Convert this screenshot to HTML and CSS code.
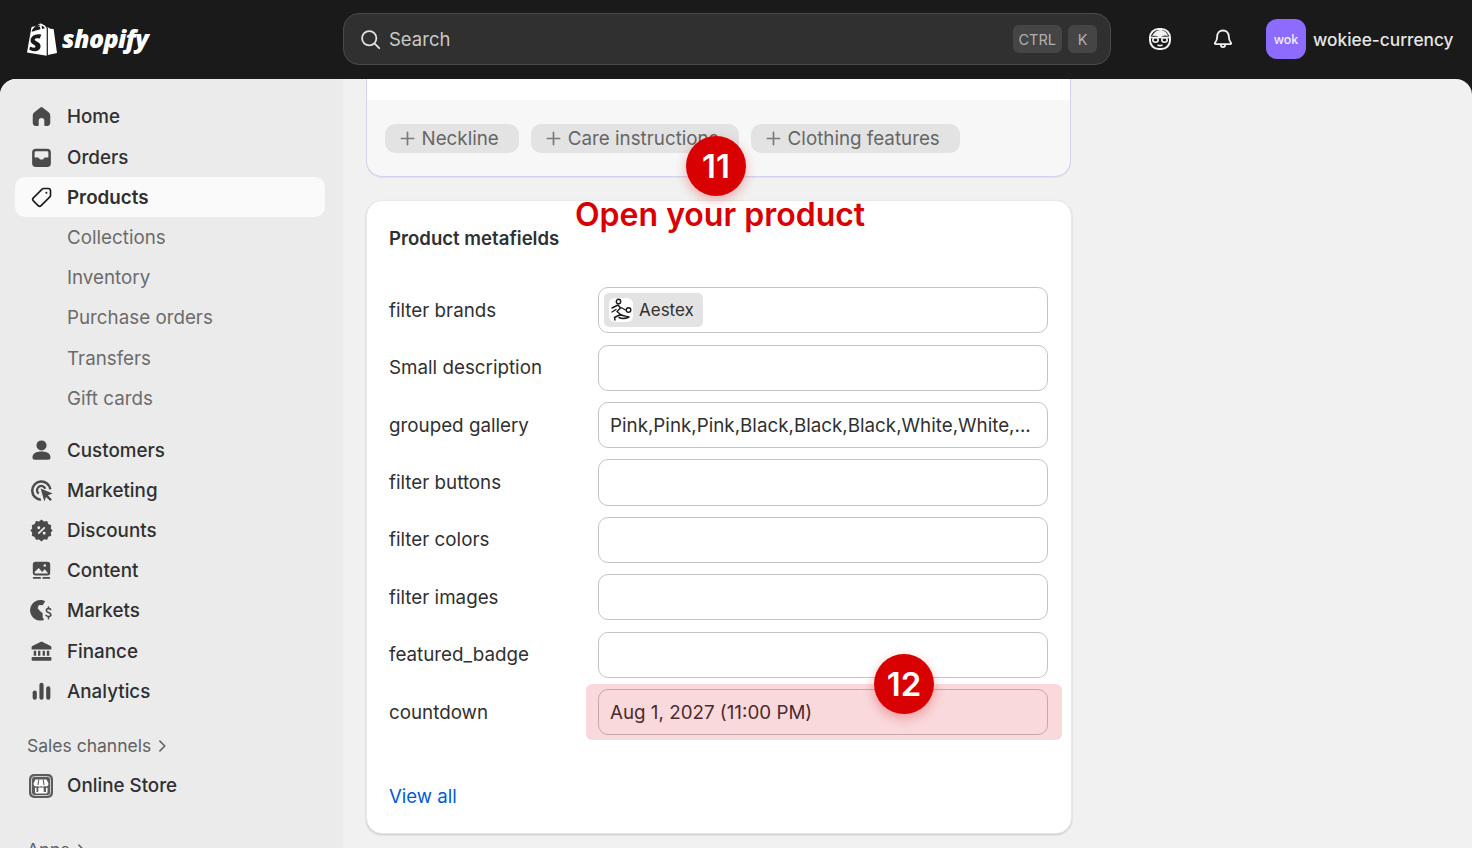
FILE: index.html
```html
<!DOCTYPE html>
<html lang="en">
<head>
<meta charset="utf-8">
<title>Shopify admin</title>
<link rel="stylesheet" href="styles.css">
</head>
<body>
<div class="page">
  <header class="topbar">
    <div class="brand">
      <svg class="bag" viewBox="5 0 25 34" width="30" height="34" preserveAspectRatio="none"><path fill="#fff" fill-rule="evenodd" d="M22.6 5.4l-1.5.5c-.4-1.300-1.200-2.700-2.500-3.100-.2-.2-.5-.4-.8-.5C16.500.8 14.900 2 13.800 3.400c-1.500.4-3 1-3.800 1.200-.8.3-1.200.4-1.400 1.300L5 30.500 21.400 33.700V5.200zM19.900 6.300l-2.400.7c.1-1.200-.1-2.400-.5-3.200 1.500.3 2.500 1.400 2.900 2.500zM16.200 7.300l-4.500 1.400c.6-2.400 1.900-3.900 3.500-4.500.7.700 1 2 1 3.100zM14.300 3.100c.4-.3.900-.5 1.400-.4.200 0 .4.100.6.200-2 1-4 3.200-4.800 6.100l-2.700.8C9.500 7 11.500 4 14.300 3.100z"/><path fill="#fff" d="M22.400 5.200l2 1.600 2.500.2c.2 0 .3.200.3.300L30 30.900l-7.600 2.100z"/><path fill="#1a1a1a" d="M16.700 13.200l-1 3.400s-1.100-.5-2.400-.4c-1.900.1-1.900 1.300-1.900 1.600.1 1.700 4.600 2 4.900 6 .2 3.100-1.700 5.300-4.400 5.400-3.200.2-5-1.700-5-1.700l.7-2.900s1.800 1.300 3.200 1.200c.9-.1 1.300-.8 1.200-1.300-.1-2.200-3.800-2.100-4-5.800-.2-3.100 1.900-6.200 6.400-6.500 1.700-.1 2.700.5 2.700.5z"/></svg>
      <span class="wordmark">shopify</span>
    </div>
    <div class="search">
      <svg class="ic-search" viewBox="0 0 20 20" fill="none" stroke="#e3e3e3" stroke-width="1.700" stroke-linecap="round"><circle cx="8.800" cy="8.800" r="6.800"/><path d="M13.700 13.700l4.600 4.600"/></svg>
      <span class="search-text">Search</span>
      <span class="key">CTRL</span>
      <span class="key">K</span>
    </div>
    <div class="top-actions">
      <svg class="ic-top" viewBox="0 0 24 24" fill="none" stroke="#f1f1f1" stroke-width="2"><rect x="2" y="2" width="20" height="20" rx="8.500"/><path fill="#f1f1f1" stroke="none" d="M4 9c2-4 5-6 8-6 4 0 7 2.500 8 6-4-1.500-6 .5-8 1.500C10 9.500 8 8 4 9z"/><path d="M2.500 10.500l19 0" stroke-width="1.600"/><ellipse cx="7.500" cy="13" rx="2.700" ry="2.200" stroke-width="1.600"/><ellipse cx="16.500" cy="13" rx="2.700" ry="2.200" stroke-width="1.600"/><path d="M9.500 18c1.500.8 3.500.8 5 0" stroke-width="1.600"/></svg>
      <svg class="ic-top" viewBox="0 0 24 24" fill="none" stroke="#f1f1f1" stroke-width="1.800" stroke-linejoin="round"><path d="M12 3.500c-3.500 0-5.800 2.600-5.800 6 0 3-.7 4.500-2.200 6.300-.5.600-.1 1.400.6 1.400h14.800c.7 0 1.100-.8.600-1.400-1.500-1.800-2.200-3.300-2.200-6.300 0-3.400-2.300-6-5.800-6z"/><path d="M9.800 17.500c0 1.500 1 2.700 2.200 2.700s2.200-1.200 2.200-2.700"/></svg>
    </div>
    <div class="account">
      <span class="avatar">wok</span>
      <span class="store-name">wokiee-currency</span>
    </div>
  </header>

  <div class="shell">
    <nav class="sidebar">
      <a class="item"><svg class="ic" viewBox="0 0 20 20"><path fill="#4a4a4a" d="M8.900 2.900a1.750 1.750 0 0 1 2.200 0l4.600 3.700c.9.700 1.300 1.700 1.300 2.800V15a2.500 2.500 0 0 1-2.500 2.500H13a.75.75 0 0 1-.75-.75V13.500a2.250 2.250 0 0 0-4.500 0v3.250A.75.75 0 0 1 7 17.500H5.500A2.500 2.500 0 0 1 3 15V9.400c0-1.100.4-2.100 1.300-2.800z"/></svg><span>Home</span></a>
      <a class="item"><svg class="ic" viewBox="0 0 20 20"><path fill="#4a4a4a" fill-rule="evenodd" d="M2.500 6A3 3 0 0 1 5.500 3h9a3 3 0 0 1 3 3v8.500a3 3 0 0 1-3 3h-9a3 3 0 0 1-3-3zM4.500 6a1 1 0 0 1 1-1h9a1 1 0 0 1 1 1v4h-2.700a1 1 0 0 0-.9.550l-.2.400a1 1 0 0 1-.9.550H9.200a1 1 0 0 1-.9-.550l-.2-.400A1 1 0 0 0 7.200 10H4.500z"/></svg><span>Orders</span></a>
      <a class="item active"><svg class="ic" viewBox="0 0 20 20" fill="none" stroke="#1a1a1a" stroke-width="1.300" stroke-linejoin="round"><path d="M11.700 2.800h3.800a1.700 1.700 0 0 1 1.700 1.700v3.800a1.700 1.700 0 0 1-.5 1.200l-7 7a1.700 1.700 0 0 1-2.400 0l-3.800-3.800a1.700 1.700 0 0 1 0-2.400l7-7a1.700 1.700 0 0 1 1.200-.5z"/><circle cx="13.900" cy="6.100" r=".8" fill="#1a1a1a" stroke="none"/></svg><span>Products</span></a>
      <a class="item sub">Collections</a>
      <a class="item sub">Inventory</a>
      <a class="item sub">Purchase orders</a>
      <a class="item sub">Transfers</a>
      <a class="item sub">Gift cards</a>
      <div class="group">
        <a class="item"><svg class="ic" viewBox="0 0 20 20"><circle cx="10" cy="5.900" r="4" fill="#4a4a4a"/><path fill="#4a4a4a" d="M2.800 15.300c0-2.900 2.900-4.600 7.200-4.600s7.200 1.700 7.200 4.600a1.900 1.900 0 0 1-1.900 2H4.700a1.900 1.900 0 0 1-1.900-2z"/></svg><span>Customers</span></a>
        <a class="item"><svg class="ic" viewBox="0 0 20 20" fill="none" stroke="#4a4a4a" stroke-width="2"><path d="M9.500 17.400A7.300 7.300 0 1 1 17.100 9"/><path d="M7.800 12.500A3.400 3.400 0 1 1 13 8.600" stroke-width="1.800"/><path fill="#4a4a4a" stroke="none" d="M9.300 8.400l9.600 4-3.800 1.300 3.200 3.400-1.300 1.300-3.400-3.300-1.300 3.700z"/></svg><span>Marketing</span></a>
        <a class="item"><svg class="ic" viewBox="-2 -2 24 24"><path fill="#4a4a4a" fill-rule="evenodd" d="M10 -.5l2.400 1.900 3-.4 1.100 2.800 2.800 1.200-.4 3 1.800 2-1.800 2 .4 3-2.800 1.100-1.100 2.800-3-.4L10 20.500l-2.400-1.900-3 .4-1.100-2.800L.7 15l.4-3L-.7 10l1.800-2-.4-3 2.800-1.200L4.600 1l3 .4zM12.500 6.300L6.300 12.500l1.200 1.200 6.200-6.200zM7.400 6a1.400 1.400 0 1 0 0 2.800 1.400 1.400 0 0 0 0-2.800zM12.600 11.200a1.400 1.400 0 1 0 0 2.800 1.400 1.400 0 0 0 0-2.800z"/></svg><span>Discounts</span></a>
        <a class="item"><svg class="ic" viewBox="-1.500 -1.500 23 23"><path fill="#4a4a4a" fill-rule="evenodd" d="M4.500 2h11A2.500 2.500 0 0 1 18 4.500v7.500a2.500 2.500 0 0 1-2.500 2.500h-11A2.500 2.500 0 0 1 2 12V4.500A2.500 2.500 0 0 1 4.500 2zM3.800 12.800h12.400L13 8.800l-2.500 2.500-3-3.500-3.700 3.400zM13 4.200a1.200 1.200 0 1 0 0 2.400 1.200 1.200 0 0 0 0-2.400z"/><rect x="2" y="16" width="7.500" height="1.700" rx=".85" fill="#4a4a4a"/><rect x="10.800" y="16" width="7.200" height="1.700" rx=".85" fill="#4a4a4a"/></svg><span>Content</span></a>
        <a class="item"><svg class="ic" viewBox="0 0 20 20"><path fill="#4a4a4a" d="M9 1.500c1.500 0 2.900.4 4 1.100l-2.100 3.100-3-.2-1 2.600 2 2.500 2 1.300v3.300l1.100 2.400A8.300 8.300 0 1 1 9 1.500z"/><path d="M17.300 9.200c-.6-1-3.400-1.300-3.400.7 0 2.100 3.600 1.400 3.600 3.500 0 1.900-3.100 1.600-3.900.5M15.600 7.200v1.400M15.600 15v1.600" fill="none" stroke="#4a4a4a" stroke-width="1.300" stroke-linecap="round"/></svg><span>Markets</span></a>
        <a class="item"><svg class="ic" viewBox="-2 -2 24 24"><path fill="#4a4a4a" fill-rule="evenodd" d="M10 .5l8.800 4.300c.5.300.7.700.7 1.200V8H.5V6c0-.5.200-.9.700-1.200zM2.500 9.200h2.400v5H2.500zM6.700 9.200h2.200v5H6.700zM11.100 9.200h2.200v5h-2.200zM15.100 9.200h2.400v5h-2.400zM1.500 15.200h17a1 1 0 0 1 1 1V18a1 1 0 0 1-1 1h-17a1 1 0 0 1-1-1v-1.800a1 1 0 0 1 1-1z"/></svg><span>Finance</span></a>
        <a class="item"><svg class="ic" viewBox="-2 -2 24 24"><rect x="1.500" y="9" width="4" height="9" rx="2" fill="#4a4a4a"/><rect x="8" y="1.500" width="4" height="16.500" rx="2" fill="#4a4a4a"/><rect x="14.500" y="5" width="4" height="13" rx="2" fill="#4a4a4a"/></svg><span>Analytics</span></a>
      </div>
      <div class="heading">Sales channels <svg class="chev" viewBox="0 0 10 10" fill="none" stroke="#616161" stroke-width="1.100" stroke-linecap="round" stroke-linejoin="round"><path d="M3.500 1.500L7 5 3.500 8.500"/></svg></div>
      <a class="item"><svg class="ic ic-store" viewBox="0 0 24 24"><rect x="0" y="0" width="24" height="24" rx="5" fill="#5c5c5c"/><rect x="2.500" y="2.500" width="19" height="19" rx="3" fill="#5c5c5c" stroke="#dcdcdc" stroke-width=".9"/><path fill="#fff" fill-rule="evenodd" d="M6.500 5.500h11l2 4c0 1.700-1.200 3-2.700 3-.5 0-.9-.100-1.300-.4a2.800 2.800 0 0 1-3.500 0 2.800 2.800 0 0 1-3.500 0c-.4.300-.8.400-1.300.4-1.500 0-2.700-1.300-2.700-3zM6 13.800c.5.200 1 .2 1.500 0V18h1.800v-3.500a1 1 0 0 1 1-1h3.400a1 1 0 0 1 1 1V18h2.300v-4.200c.5.200 1 .2 1.500 0V18a1.500 1.500 0 0 1-1.500 1.500h-9.500A1.500 1.500 0 0 1 6 18z"/><path d="M9.800 5.500L9 11M14.200 5.500l.8 5.500" stroke="#5c5c5c" stroke-width="1.100"/></svg><span>Online Store</span></a>
      <div class="heading apps">Apps <svg class="chev" viewBox="0 0 10 10" fill="none" stroke="#616161" stroke-width="1.100" stroke-linecap="round" stroke-linejoin="round"><path d="M3.500 1.500L7 5 3.500 8.500"/></svg></div>
    </nav>

    <main class="main">
      <section class="card card-top">
        <div class="card-top-white"></div>
        <div class="chips">
          <span class="chip"><svg class="plus" viewBox="0 0 16 16" stroke="#7a7a7a" stroke-width="1.800" stroke-linecap="round"><path d="M8 1.500v13M1.500 8h13"/></svg>Neckline</span>
          <span class="chip"><svg class="plus" viewBox="0 0 16 16" stroke="#7a7a7a" stroke-width="1.800" stroke-linecap="round"><path d="M8 1.500v13M1.500 8h13"/></svg>Care instructions</span>
          <span class="chip"><svg class="plus" viewBox="0 0 16 16" stroke="#7a7a7a" stroke-width="1.800" stroke-linecap="round"><path d="M8 1.500v13M1.500 8h13"/></svg>Clothing features</span>
        </div>
      </section>

      <section class="card card-meta">
        <h2 class="title">Product metafields</h2>
        <div class="fields">
          <div class="label">filter brands</div>
          <div class="field field-tag">
            <span class="brand-chip">
              <svg class="brand-logo" viewBox="0 0 24 24" fill="none" stroke="#1a1a1a" stroke-width="1.400" stroke-linecap="round" stroke-linejoin="round"><circle cx="9.500" cy="3.500" r="2.200"/><path d="M3 10l6-3 2.500 3-3.500 3.500 3.500 3-6 3 .5 2.500M3 14l4-2.500M11 16.500c3 1.500 6 1.500 9 2.500-3 1.500-6 2.500-10 .5"/><circle cx="19.500" cy="12" r="2.300"/><path d="M12 9.500l4.500 2.500"/></svg>
              Aestex
            </span>
          </div>
          <div class="label">Small description</div>
          <div class="field"></div>
          <div class="label">grouped gallery</div>
          <div class="field">Pink,Pink,Pink,Black,Black,Black,White,White,...</div>
          <div class="label">filter buttons</div>
          <div class="field"></div>
          <div class="label">filter colors</div>
          <div class="field"></div>
          <div class="label">filter images</div>
          <div class="field"></div>
          <div class="label">featured_badge</div>
          <div class="field"></div>
          <div class="label">countdown</div>
          <div class="field">Aug 1, 2027 (11:00 PM)</div>
        </div>
        <a class="view-all">View all</a>
      </section>
    </main>
  </div>

  <div class="highlight"></div>
  <div class="badge badge-11">11</div>
  <div class="callout">Open your product</div>
  <div class="badge badge-12">12</div>
</div>
</body>
</html>
```

FILE: styles.css
```css
* { box-sizing: border-box; }
html, body { margin: 0; padding: 0; }
body { font-family: Inter, "Liberation Sans", sans-serif; background: #1a1a1a; }

.page { position: relative; width: 1472px; height: 848px; overflow: hidden; background: #1a1a1a; }

/* top bar */
.topbar { display: flex; align-items: center; height: 79px; padding-bottom: 1px; color: #e3e3e3; }
.brand { display: flex; align-items: center; gap: 5px; width: 343px; padding: 0 0 0 27px; }
.bag { display: block; }
.wordmark { font-family: "Open Sans", sans-serif; font-style: italic; font-weight: 800; font-size: 25px; letter-spacing: -.6px; color: #fff; line-height: 1; margin-top: -2px; }
.search { display: flex; align-items: center; gap: 6px; width: 768px; height: 52px; padding: 0 13px 0 16px; background: #303030; border: 1.500px solid #4a4a4a; border-radius: 16px; }
.ic-search { width: 21px; height: 21px; display: block; margin-right: 2px; }
.search-text { flex: 1; font-size: 18.500px; color: #c9c9c9; }
.key { display: flex; align-items: center; justify-content: center; height: 28px; min-width: 29px; padding: 0 6px; border-radius: 6px; background: #454545; color: #b0b0b0; font-size: 14.500px; }
.top-actions { display: flex; align-items: center; gap: 39px; padding-left: 37px; }
.ic-top { width: 24px; height: 24px; display: block; }
.account { display: flex; align-items: center; gap: 7px; margin-left: 31px; }
.avatar { display: flex; align-items: center; justify-content: center; width: 40px; height: 40px; border-radius: 11px; background: #8e6bff; color: #f3f0ff; font-size: 12.500px; font-weight: 500; }
.store-name { font-size: 17.300px; font-weight: 500; color: #e6e6e6; white-space: nowrap; }

/* shell */
.shell { display: flex; height: 769px; background: #f1f1f1; border-radius: 16px 16px 0 0; overflow: hidden; }
.sidebar { width: 343px; flex: none; padding: 17.800px 18px 0 15px; background: #ebebeb; overflow: hidden; }
.item { display: flex; align-items: center; gap: 16px; height: 40.200px; padding-left: 16px; border-radius: 10px; font-size: 18.800px; font-weight: 500; color: #303030; white-space: nowrap; }
.item.active { background: #fafafa; font-weight: 600; }
.item.sub { padding-left: 52px; font-weight: 400; color: #6b6b6b; }
.ic { width: 25px; height: 25px; margin: 0 -2.500px; flex: none; display: block; overflow: visible; }
.ic-store { width: 24px; height: 24px; margin: 0 -2px; }
.group { margin-top: 11.700px; }
.heading { display: flex; align-items: center; gap: 4px; height: 40px; margin-top: 14.500px; padding-left: 12px; font-size: 17.500px; font-weight: 400; color: #616161; }
.heading.apps { margin-top: 24px; }
.chev { width: 14px; height: 14px; display: block; }

/* main */
.main { flex: 1; padding: 0 0 0 22.500px; overflow: hidden; }
.card { background: #fff; border-radius: 16px; }
.card-top { width: 705px; margin-left: .5px; height: 98px; border: 1.500px solid #d5d2ec; border-top: 0; border-radius: 0 0 16px 16px; background: #f7f7f7; overflow: hidden; box-shadow: 0 1px 1px rgba(0,0,0,.06); }
.card-top-white { height: 21px; background: #fff; }
.chips { display: flex; gap: 12px; padding: 24px 0 0 17.500px; }
.chip { display: flex; align-items: center; gap: 7px; height: 29px; padding: 0 20px 0 15px; border-radius: 10px; background: #e3e3e3; color: #666; font-size: 18.800px; white-space: nowrap; }
.plus { width: 15px; height: 15px; display: block; fill: none; }
.card-meta { width: 706px; height: 633.500px; margin-top: 23px; padding: 0 22.500px; border: 1px solid #e8e8e8; box-shadow: 0 1px 2px rgba(0,0,0,.18); }
.title { margin: 0; padding-top: 25px; height: 86.300px; font-size: 18.600px; font-weight: 600; line-height: 24px; color: #303030; }
.fields { display: grid; grid-template-columns: 209px 450px; row-gap: 11.200px; grid-auto-rows: 46.200px; align-items: center; }
.label { font-size: 18.800px; color: #303030; }
.field { display: flex; align-items: center; height: 46.200px; padding: 0 11px; border: 1px solid #c4c4c4; border-radius: 10px; background: #fff; font-size: 18.800px; color: #303030; white-space: nowrap; overflow: hidden; }
.field-tag { padding: 0 5px; }
.brand-chip { display: flex; align-items: center; gap: 6px; height: 34px; padding: 0 9px 0 5px; border-radius: 5px; background: #e3e3e3; font-size: 17px; }
.brand-logo { width: 24px; height: 24px; background: #fff; border-radius: 6px; display: block; }
.view-all { display: block; margin-top: 48.600px; font-size: 18.600px; line-height: 24px; color: #005bd3; }

/* annotations */
.highlight { position: absolute; left: 586px; top: 684px; width: 476px; height: 56px; border-radius: 6px; background: rgba(220,20,40,.16); }
.badge { position: absolute; width: 60px; height: 60px; border-radius: 50%; background: #d80000; color: #fff; display: flex; align-items: center; justify-content: center; font-size: 33px; font-weight: 600; box-shadow: 0 4px 12px rgba(216,0,0,.3); }
.badge-11 { left: 686px; top: 136px; }
.badge-12 { left: 874px; top: 654px; }
.callout { position: absolute; left: 575px; top: 195px; font-size: 32px; line-height: 40px; font-weight: 600; color: #d80000; white-space: nowrap; }
```
